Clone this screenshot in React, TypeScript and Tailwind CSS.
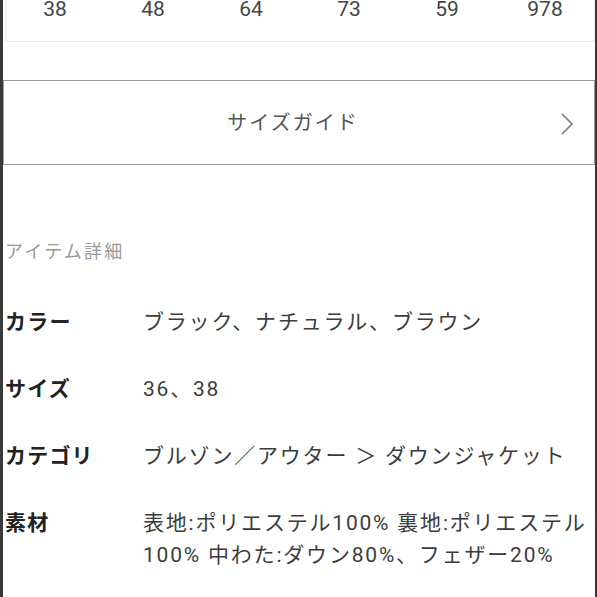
import React from 'react'

const sizes = ['38', '48', '64', '73', '59', '978']

const details: { label: string; value: React.ReactNode }[] = [
    { label: 'カラー', value: 'ブラック、ナチュラル、ブラウン' },
    { label: 'サイズ', value: '36、38' },
    { label: 'カテゴリ', value: 'ブルゾン／アウター ＞ ダウンジャケット' },
    {
        label: '素材',
        value: (
            <>
                表地:ポリエステル100% 裏地:ポリエステル
                <br />
                100% 中わた:ダウン80%、フェザー20%
            </>
        ),
    },
]

export default function App() {
    return (
        <div
            className="w-[597px] h-[597px] overflow-hidden bg-white border-l-[3px] border-r-2 border-[#3a3a3a] text-[#333]"
            style={{ fontFamily: 'Roboto, "Noto Sans CJK JP", sans-serif' }}
        >
            {/* size table tail */}
            <div className="ml-[2px] border border-t-0 border-[#ececec] h-[43px] -mt-[1px] grid grid-cols-6">
                {sizes.map((s) => (
                    <div key={s} className="text-center text-[21px] leading-[22px] -mt-[1px] text-[#444]">
                        {s}
                    </div>
                ))}
            </div>

            {/* size guide button */}
            <div className="mt-[38px] border border-[#9a9a9a] h-[85px] flex items-center relative">
                <div className="flex-1 text-center text-[20px] tracking-[2px] text-[#555] pr-[12px]">サイズガイド</div>
                <svg
                    className="absolute right-[20px] top-[32px]"
                    width="14"
                    height="22"
                    viewBox="0 0 14 22"
                    fill="none"
                    stroke="#777"
                    strokeWidth="1.6"
                >
                    <path d="M2 1 L12 11 L2 21" />
                </svg>
            </div>

            {/* item details */}
            <div className="pl-[2px] mt-[75px] text-[18px] tracking-[2.2px] leading-[24px] text-[#999]">アイテム詳細</div>

            <div className="pl-[2px] mt-[42px] flex flex-col gap-[35px]">
                {details.map((d) => (
                    <div key={d.label} className="flex">
                        <div className="w-[138px] shrink-0 text-[21px] tracking-[1.2px] leading-[32px] font-bold text-[#222]">
                            {d.label}
                        </div>
                        <div className="text-[21px] tracking-[1.8px] leading-[32px] text-[#3c3c3c] whitespace-nowrap">
                            {d.value}
                        </div>
                    </div>
                ))}
            </div>
        </div>
    )
}
